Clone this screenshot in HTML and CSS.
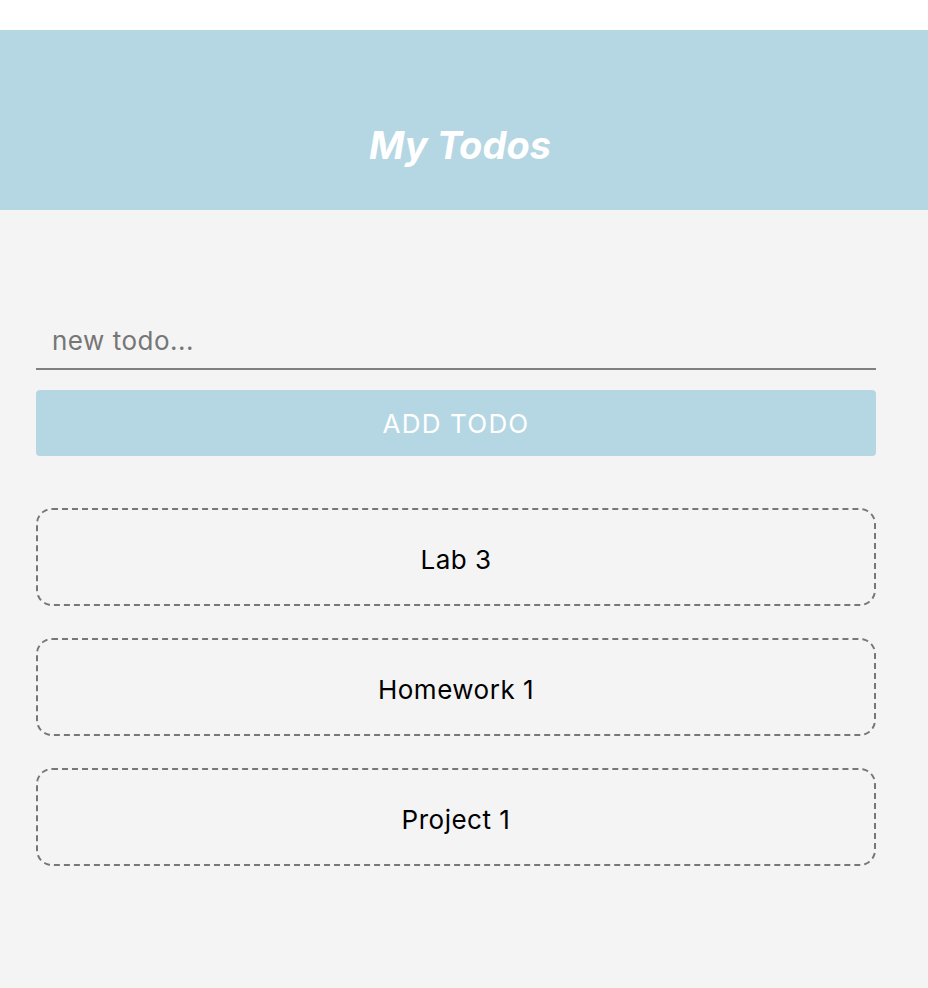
FILE: index.html
```html
<!DOCTYPE html>
<html lang="en">
<head>
<meta charset="utf-8">
<title>My Todos</title>
<link rel="stylesheet" href="styles.css">
</head>
<body>
<div class="topbar"></div>
<header class="header">
  <h1 class="title">My Todos</h1>
</header>
<main class="content">
  <form class="todo-form">
    <input class="todo-input" type="text" placeholder="new todo...">
    <button class="add-btn" type="button">ADD TODO</button>
  </form>
  <ul class="todo-list">
    <li class="todo-item">Lab 3</li>
    <li class="todo-item">Homework 1</li>
    <li class="todo-item">Project 1</li>
  </ul>
</main>
</body>
</html>
```
FILE: styles.css
```css
* { box-sizing: border-box; }
html, body { margin: 0; padding: 0; }
body {
  background: #f4f4f4;
  font-family: Inter, "Liberation Sans", sans-serif;
  min-height: 988px;
}
.topbar { height: 30px; background: #ffffff; }
.header {
  height: 180px;
  background: #b5d7e3;
  display: flex;
  align-items: center;
  justify-content: center;
  padding: 50px 8px 0 0;
}
.title {
  margin: 0;
  color: #ffffff;
  font-size: 38px;
  font-weight: 700;
  font-style: italic;
  line-height: 1;
}
.content {
  padding: 102px 52px 0 36px;
}
.todo-form {
  display: flex;
  flex-direction: column;
  gap: 20px;
}
.todo-input {
  height: 58px;
  border: none;
  border-bottom: 2px solid #808080;
  background: transparent;
  padding: 0 16px;
  font-family: inherit;
  font-size: 26px;
  letter-spacing: 0.5px;
  color: #333;
  outline: none;
}
.todo-input::placeholder { color: #767676; }
.add-btn {
  height: 66px;
  border: none;
  border-radius: 4px;
  background: #b5d7e3;
  color: #ffffff;
  font-family: inherit;
  font-size: 26px;
  letter-spacing: 1.2px;
}
.todo-list {
  list-style: none;
  margin: 52px 0 0;
  padding: 0;
  display: flex;
  flex-direction: column;
  gap: 32px;
}
.todo-item {
  height: 98px;
  border: 2px dashed #777777;
  border-radius: 16px;
  display: flex;
  align-items: center;
  justify-content: center;
  padding-top: 4px;
  font-size: 26px;
  letter-spacing: 0.5px;
  color: #000;
}
```
